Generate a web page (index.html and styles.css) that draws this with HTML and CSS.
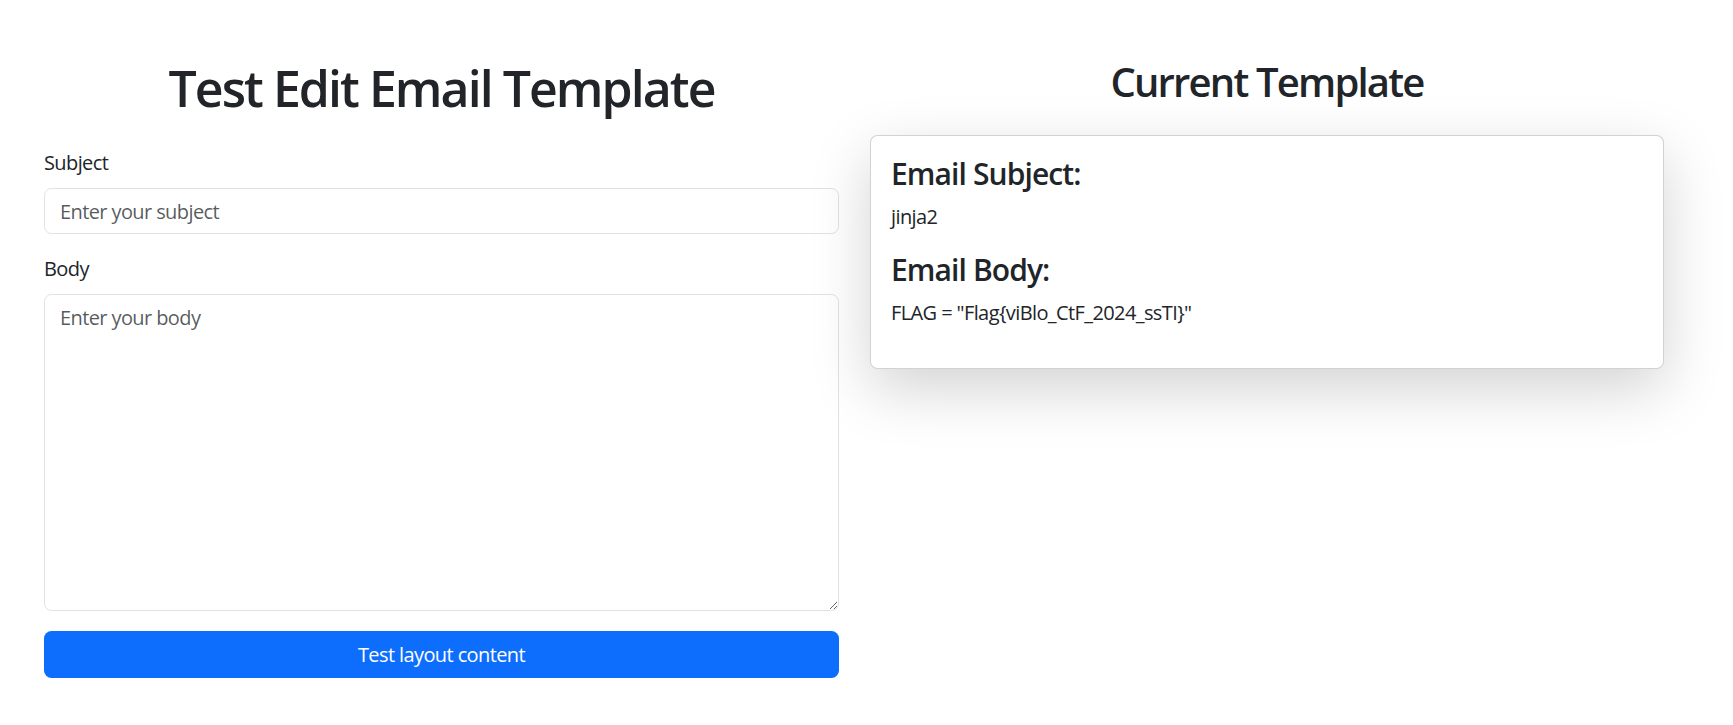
FILE: index.html
```html
<!DOCTYPE html>
<html lang="en">
<head>
<meta charset="utf-8">
<title>Test Edit Email Template</title>
<link rel="stylesheet" href="styles.css">
</head>
<body>
<div class="page">
  <section class="editor">
    <h1 class="title">Test Edit Email Template</h1>
    <form class="form">
      <div class="field">
        <label class="label" for="subject">Subject</label>
        <input class="control" id="subject" type="text" placeholder="Enter your subject">
      </div>
      <div class="field">
        <label class="label" for="body">Body</label>
        <textarea class="control area" id="body" rows="10" placeholder="Enter your body"></textarea>
      </div>
      <button class="btn" type="button">Test layout content</button>
    </form>
  </section>
  <section class="preview">
    <h2 class="subtitle">Current Template</h2>
    <div class="card">
      <h4 class="card-head">Email Subject:</h4>
      <p class="card-text">jinja2</p>
      <h4 class="card-head">Email Body:</h4>
      <p class="card-text">FLAG = "Flag{viBlo_CtF_2024_ssTI}"</p>
    </div>
  </section>
</div>
</body>
</html>
```

FILE: styles.css
```css
* { box-sizing: border-box; }

body {
  margin: 0;
  background: #fff;
  color: #212529;
  font-family: "Open Sans", "Noto Sans", sans-serif;
  font-size: 20px;
  line-height: 30px;
  letter-spacing: -0.03em;
}

.page {
  display: grid;
  grid-template-columns: 795px 794px;
  column-gap: 31px;
  padding: 58px 0 0 44px;
  align-items: start;
}

.title {
  margin: 0 0 30px;
  font-size: 50px;
  line-height: 60px;
  font-weight: 600;
  text-align: center;
  letter-spacing: -0.039em;
}

.form { margin: 0; }

.field { margin-bottom: 20px; }

.label {
  display: block;
  margin-bottom: 10px;
}

.control {
  display: block;
  width: 100%;
  height: 46px;
  padding: 7px 15px;
  border: 1px solid #dee2e6;
  border-radius: 7.5px;
  background: #fff;
  color: #212529;
  font: inherit;
  letter-spacing: inherit;
  outline: none;
}

.control::placeholder {
  color: rgba(33, 37, 41, 0.75);
  opacity: 1;
}

.area {
  height: 317px;
  padding: 7.5px 15px;
  resize: vertical;
}

.btn {
  display: block;
  width: 100%;
  height: 47px;
  padding: 0 15px;
  border: 0;
  border-radius: 7.5px;
  background: #0d6efd;
  color: #fff;
  font: inherit;
  letter-spacing: inherit;
  cursor: pointer;
}

.subtitle {
  margin: 0 0 29px;
  font-size: 40px;
  line-height: 48px;
  font-weight: 600;
  text-align: center;
  letter-spacing: -0.045em;
}

.card {
  padding: 20px;
  border: 1px solid rgba(0, 0, 0, 0.175);
  border-radius: 7.5px;
  background: #fff;
  box-shadow: 0 20px 60px rgba(0, 0, 0, 0.175);
}

.card-head {
  margin: 0 0 10px;
  font-size: 30px;
  line-height: 36px;
  font-weight: 600;
  letter-spacing: -0.03em;
}

.card-text {
  margin: 0 0 20px;
}
```
